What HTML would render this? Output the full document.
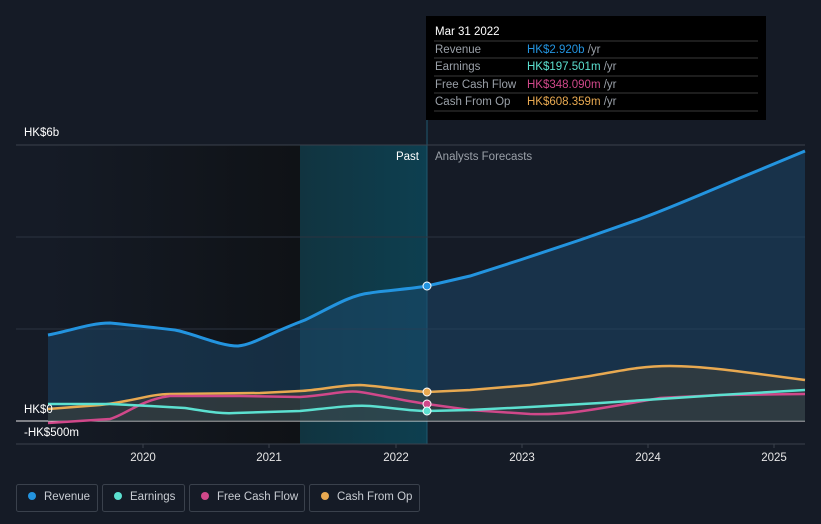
<!DOCTYPE html>
<html><head><style>
html,body{margin:0;width:821px;height:524px;overflow:hidden;background:#151b26;font-family:"Liberation Sans",sans-serif;}
svg{display:block}
svg text{font-family:"Liberation Sans",sans-serif;}
</style></head><body>
<svg width="821" height="524" viewBox="0 0 821 524" xmlns="http://www.w3.org/2000/svg">
<defs>
<linearGradient id="past" x1="0" x2="1" y1="0" y2="0">
<stop offset="0" stop-color="#151b26"/><stop offset="1" stop-color="#0f1216"/></linearGradient>
<linearGradient id="hl" x1="0" x2="1" y1="0" y2="0">
<stop offset="0" stop-color="#113440"/><stop offset="1" stop-color="#0d3f50"/></linearGradient>
</defs>
<rect width="821" height="524" fill="#151b26"/>
<rect x="48" y="145" width="252" height="299" fill="url(#past)"/>
<rect x="300" y="145" width="127" height="299" fill="url(#hl)"/>
<line x1="427" y1="120" x2="427" y2="444" stroke="#1f5a70" stroke-width="1"/>
<g stroke="#2c3340" stroke-width="1">
<line x1="16" y1="145" x2="805" y2="145" stroke="#3a414c"/>
<line x1="16" y1="237" x2="805" y2="237"/>
<line x1="16" y1="329" x2="805" y2="329"/>
<line x1="16" y1="444" x2="805" y2="444" stroke="#3a414c"/>
</g>
<line x1="16" y1="421" x2="805" y2="421" stroke="#e6e6e6" stroke-width="1"/>
<path d="M48,335 C70,331 90,323 110,323 C130,325 150,327 175,330 C195,334 220,346 238,346 C255,344 265,335 305,320 C330,308 350,295 370,293 C390,290 410,289 427,286 L470,276 L520,260 L580,240 L640,219 C670,208 700,195 740,178 L805,151 L805,421 L48,421Z" fill="#1b4a6e" fill-opacity="0.5"/>
<path d="M48,335 C70,331 90,323 110,323 C130,325 150,327 175,330 C195,334 220,346 238,346 C255,344 265,335 305,320 C330,308 350,295 370,293 C390,290 410,289 427,286 L470,276 L520,260 L580,240 L640,219 C670,208 700,195 740,178 L805,151" fill="none" stroke="#2394df" stroke-width="3"/>
<path d="M48,409 L100,405 C130,402 150,394 170,394 L260,393 L300,391 C320,390 340,385 360,385 C380,386 400,390 427,392 L470,390 L530,385 L590,376 C620,371 640,366 670,366 C700,366 730,370 805,380 L805,421 L48,421Z" fill="#5a4a30" fill-opacity="0.35"/>
<path d="M48,409 L100,405 C130,402 150,394 170,394 L260,393 L300,391 C320,390 340,385 360,385 C380,386 400,390 427,392 L470,390 L530,385 L590,376 C620,371 640,366 670,366 C700,366 730,370 805,380" fill="none" stroke="#e8a951" stroke-width="2.5"/>
<path d="M48,423 L110,419 C125,415 140,400 170,396 L240,396 L300,397 C330,395 345,390 360,392 C380,395 400,400 427,404 L470,410 L530,414 C560,415 580,412 620,405 L660,398 L720,395 L805,394" fill="none" stroke="#d0488a" stroke-width="2.5"/>
<path d="M48,404 L110,404 L150,406 L185,408 C205,411 220,414 235,413 L300,411 C330,408 350,405 370,406 C395,408 410,411 427,411 L470,410 L530,407 L600,403 L660,399 L720,395 L805,390" fill="none" stroke="#5ce0d0" stroke-width="2.5"/>
<circle cx="427" cy="286" r="4" fill="#2394df" stroke="#fff" stroke-width="1"/>
<circle cx="427" cy="392" r="4" fill="#e8a951" stroke="#fff" stroke-width="1"/>
<circle cx="427" cy="404" r="4" fill="#d0488a" stroke="#fff" stroke-width="1"/>
<circle cx="427" cy="411" r="4" fill="#5ce0d0" stroke="#fff" stroke-width="1"/>
<g fill="#fff" font-size="11.5">
<text x="24" y="136">HK$6b</text>
<text x="24" y="413">HK$0</text>
<text x="24" y="436">-HK$500m</text>
</g>
<text x="419" y="160" fill="#fff" font-size="11.5" text-anchor="end">Past</text>
<text x="435" y="160" fill="#9aa0a8" font-size="11.5">Analysts Forecasts</text>
<g fill="#e6e6e6" font-size="11.5" text-anchor="middle">
<text x="143" y="461">2020</text><text x="269" y="461">2021</text><text x="396" y="461">2022</text>
<text x="522" y="461">2023</text><text x="648" y="461">2024</text><text x="774" y="461">2025</text>
</g>
<g stroke="#3a414c"><line x1="143" y1="444" x2="143" y2="448"/><line x1="269" y1="444" x2="269" y2="448"/><line x1="396" y1="444" x2="396" y2="448"/><line x1="522" y1="444" x2="522" y2="448"/><line x1="648" y1="444" x2="648" y2="448"/><line x1="774" y1="444" x2="774" y2="448"/></g>
<rect x="426" y="16" width="340" height="104" fill="#000"/>
<text x="435" y="35" fill="#fff" font-size="11.5">Mar 31 2022</text>
<g stroke="#3a3a3a"><line x1="434" y1="41" x2="758" y2="41"/><line x1="434" y1="58" x2="758" y2="58"/><line x1="434" y1="76" x2="758" y2="76"/><line x1="434" y1="93" x2="758" y2="93"/><line x1="434" y1="111" x2="758" y2="111"/></g>
<g font-size="11.5" fill="#9aa0a8">
<text x="435" y="53">Revenue</text><text x="435" y="70">Earnings</text><text x="435" y="88">Free Cash Flow</text><text x="435" y="105">Cash From Op</text>
<text x="527" y="53"><tspan fill="#2394df">HK$2.920b</tspan> /yr</text>
<text x="527" y="70"><tspan fill="#5ce0d0">HK$197.501m</tspan> /yr</text>
<text x="527" y="88"><tspan fill="#d0488a">HK$348.090m</tspan> /yr</text>
<text x="527" y="105"><tspan fill="#e8a951">HK$608.359m</tspan> /yr</text>
</g>
<g stroke="#3a414c" fill="none">
<rect x="16.5" y="484.5" width="81" height="27" rx="2"/>
<rect x="102.5" y="484.5" width="82" height="27" rx="2"/>
<rect x="189.5" y="484.5" width="115" height="27" rx="2"/>
<rect x="309.5" y="484.5" width="110" height="27" rx="2"/>
</g>
<circle cx="32" cy="496" r="4" fill="#2394df"/><circle cx="118" cy="496" r="4" fill="#5ce0d0"/>
<circle cx="205" cy="496" r="4" fill="#d0488a"/><circle cx="325" cy="496" r="4" fill="#e8a951"/>
<g fill="#c8ccd2" font-size="11.5">
<text x="44" y="500">Revenue</text><text x="130" y="500">Earnings</text>
<text x="217" y="500">Free Cash Flow</text><text x="337" y="500">Cash From Op</text>
</g>
</svg>
</body></html>
